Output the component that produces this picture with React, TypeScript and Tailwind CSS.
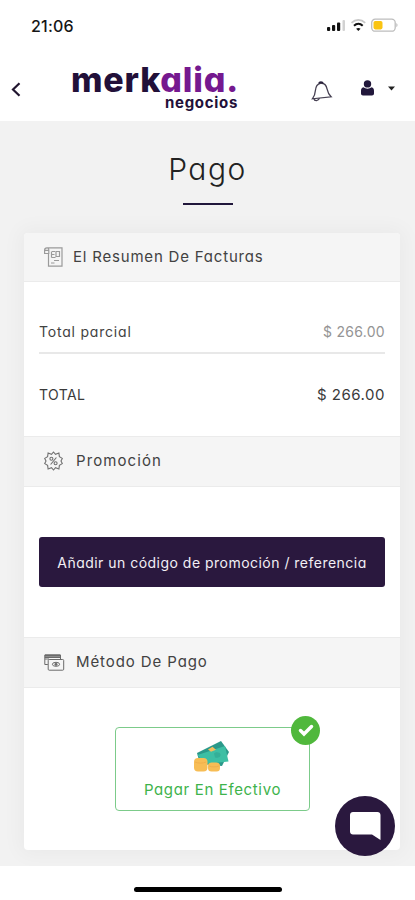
import React from 'react';

interface SectionHeaderProps {
  icon: React.ReactNode;
  title: string;
  className: string;
}

const SectionHeader: React.FC<SectionHeaderProps> = ({ icon, title, className }) => (
  <div className="h-[51px] shrink-0 bg-[#f5f5f5] border-y border-[#ebebeb] flex items-center pl-5 pb-px text-[#424242] first:h-[49px] first:border-t-0">
    {icon}
    <h2 className={`text-[15px] leading-5 whitespace-nowrap ${className}`}>{title}</h2>
  </div>
);

const InvoiceIcon = () => (
  <svg width="19" height="20" viewBox="0 0 19 20" fill="none" stroke="#9a9a9a" strokeWidth="1.200">
    <path d="M3 .8h15v18.400H4.500V6.500M3 .8C1.200.8.6 1.800.6 3.200v3.300h4.200V3.200C4.800 1.600 4.300.8 3 .8zM.6 3.400h4" />
    <path d="M8 4.500h3M8 7.500h2.500M12 4.500h3.500v5H12zM7.500 10.500h4M10 13.500h5M7 16h3.500M7.500 4.500v6" />
  </svg>
);

const PromoIcon = () => (
  <svg width="19" height="20" viewBox="0 0 19 20" fill="none" stroke="#707070" strokeWidth="1.100">
    <path d="M9.500 1l2 2.300 3.400-1.200.5 3.500 2.900 1.800L17 10l1.300 2.600-2.900 1.800-.5 3.500-3.400-1.200-2 2.300-2-2.300-3.400 1.200-.5-3.500-2.900-1.800L2 10 .7 7.400l2.900-1.800.5-3.500 3.400 1.200z" />
    <circle cx="7.400" cy="7.800" r="1.500" />
    <circle cx="11.600" cy="12.200" r="1.500" />
    <path d="M12.400 6.500l-5.800 7" />
  </svg>
);

const PaymentIcon = () => (
  <svg width="21" height="17" viewBox="0 0 21 17" fill="none" stroke="#6a6a6a" strokeWidth="1">
    <path d="M.8 1.200h15.700M.8 3.200h15.700" strokeWidth="1.700" />
    <path d="M.8 1v9.500h3M16.500 1v4M1 5h4" />
    <rect x="4.200" y="5.500" width="15.500" height="10.700" rx="1" fill="#f5f5f5" />
    <ellipse cx="12" cy="10.300" rx="3.600" ry="2" />
    <circle cx="12" cy="10.300" r="1.100" fill="#6a6a6a" />
  </svg>
);

const CashIcon = () => (
  <svg className="absolute left-[78px] top-[12px]" width="38" height="33" viewBox="0 0 38 33">
    <path d="M3 13L27 1l8 11-7 14-22-2z" fill="#2b998a" />
    <path d="M3.500 15L31 6l3.500 15.500L11 24z" fill="#3dbfa4" />
    <path d="M14 9.500l4.500-2.800 3.500 3-5 2z" fill="#f2bd5c" />
    <path d="M20 13.500c2-2 6-1.500 6.500 1s-3 4-5.500 3z" fill="#35af98" />
    <rect x="0" y="18" width="13.500" height="13.500" rx="4" fill="#f7bd55" />
    <rect x="14" y="22.500" width="12" height="9" rx="3.500" fill="#f7bd55" />
    <path d="M1 22c3 1.500 8 1.500 11 0M15 26c3 1.200 7 1.200 10 0" stroke="#f0af4c" strokeWidth="1" fill="none" />
  </svg>
);

const StatusBar = () => (
  <div className="h-[52px] flex items-center justify-between pl-[31px] pr-[17px] pb-px">
    <span className="text-[16px] font-medium tracking-[0.2px] text-[#161616]">21:06</span>
    <svg width="72" height="15" viewBox="0 0 72 15">
      <rect x="1" y="9" width="3.200" height="4" rx="1" fill="#111" />
      <rect x="6" y="7" width="3.200" height="6" rx="1" fill="#111" />
      <rect x="11" y="4.500" width="3.200" height="8.500" rx="1" fill="#111" />
      <rect x="16.500" y="2" width="2.500" height="11" rx="1" fill="#d2d2d2" />
      <path d="M25.500 4.800c4-4 9.700-4 13.700 0" stroke="#c8c8c8" strokeWidth="1.700" fill="none" />
      <path d="M28 7.700c2.600-2.500 6.100-2.500 8.700 0" stroke="#111" strokeWidth="2" fill="none" />
      <path d="M32.350 13l-2.200-2.300c1.300-1.100 3.100-1.100 4.400 0z" fill="#111" />
      <rect x="45.700" y="1.200" width="23.500" height="12" rx="3.500" fill="none" stroke="#bdbdbd" strokeWidth="1.300" />
      <rect x="47.500" y="3" width="9" height="8.400" rx="1.800" fill="#fac412" />
      <path d="M70.300 5c1.700.8 1.700 3.400 0 4.200z" fill="#bdbdbd" />
    </svg>
  </div>
);

const Header = () => (
  <header className="h-[69px] flex items-start">
    <svg className="ml-[11px] mt-[30px]" width="10" height="15" viewBox="0 0 10 15" fill="none" stroke="#21152f" strokeWidth="2.200">
      <path d="M8.500 1.200L2 7.500l6.500 6.300" />
    </svg>
    <div className="ml-[50px] w-[168px] shrink-0">
      <div className="text-[34px] leading-[34px] mt-[11px] font-extrabold tracking-[0.8px] whitespace-nowrap text-[#221039]">
        merk<span className="text-[#75198f]">alia.</span>
      </div>
      <div className="-mt-[3px] pr-px text-right text-[15px] leading-[18px] font-bold tracking-[0.7px] whitespace-nowrap text-[#221039]">negocios</div>
    </div>
    <svg className="ml-[72px] mt-[29px]" width="22" height="22" viewBox="0 0 22 22" fill="none" stroke="#464052" strokeWidth="1.300">
      <path d="M9.500 2.300C6 2.800 4.700 6 4.400 9.500c-.2 3.500-.7 5.200-3 8.300l18.700-2c-3-2.800-3.400-4.800-4-7.700C15.200 4 13 1.800 9.500 2.300z" />
      <path d="M8 2.500c.4-1.900 3.400-2 4 0" stroke="#28213c" strokeWidth="1.800" />
      <path d="M3 17.800c.3 2.400 4.700 2.400 5.400-.6" />
    </svg>
    <svg className="ml-[28px] mt-[28px]" width="13" height="16" viewBox="0 0 13 16" fill="#21173b">
      <circle cx="6.500" cy="3.900" r="3.700" />
      <path d="M2.300 7.300c2.500 1.800 5.900 1.800 8.400 0 1.500.5 2.300 1.800 2.300 3.500v2.700c0 1.200-.8 2-2 2H2c-1.200 0-2-.8-2-2v-2.700c0-1.700.8-3 2.300-3.500z" />
    </svg>
    <svg className="ml-[14px] mt-[34px]" width="7" height="5" viewBox="0 0 7 5" fill="#222">
      <path d="M0 .5h7L3.500 4.500z" />
    </svg>
  </header>
);

const App: React.FC = () => {
  return (
    <div className="relative w-[415px] h-[900px] overflow-hidden bg-white flex flex-col font-[Inter,sans-serif] [font-feature-settings:'cv11']">
      <StatusBar />
      <Header />

      <main className="h-[745px] shrink-0 overflow-hidden bg-[#f2f2f2] flex flex-col items-center">
        <h1 className="mt-[29px] text-[30px] leading-[38px] font-light tracking-[1.5px] text-[#222]">Pago</h1>
        <div className="mt-[15px] w-[50px] h-[2px] bg-[#21173b]" />

        <section className="mt-[28px] ml-[9px] w-[376px] h-[617px] shrink-0 rounded-[4px] overflow-hidden bg-white flex flex-col shadow-[0_0_20px_5px_rgba(0,0,0,0.035)]">
          <SectionHeader icon={<InvoiceIcon />} title="El Resumen De Facturas" className="ml-[10px] tracking-[0.8px]" />
          <div className="h-[154px] shrink-0 px-[15px] text-[14px] leading-5">
            <div className="h-[72px] pt-[40px] border-b-2 border-[#e8e8e8] flex justify-between text-[#424242]">
              <span className="tracking-[0.8px]">Total parcial</span>
              <span className="tracking-[0.3px] text-[#949494]">$ 266.00</span>
            </div>
            <div className="pt-[31px] flex justify-between text-[#3a3a3a]">
              <span className="tracking-[0.4px]">TOTAL</span>
              <span className="text-[15px] tracking-[0.5px]">$ 266.00</span>
            </div>
          </div>

          <SectionHeader icon={<PromoIcon />} title="Promoción" className="ml-[13px] tracking-[1.1px]" />
          <div className="h-[150px] shrink-0 px-[15px] pt-[50px]">
            <button className="w-full h-[50px] rounded-[3px] bg-[#2a183e] text-[14px] tracking-[0.48px] text-[#f2eff5] whitespace-nowrap">
              Añadir un código de promoción / referencia
            </button>
          </div>

          <SectionHeader icon={<PaymentIcon />} title="Método De Pago" className="ml-[11px] tracking-[0.9px]" />
          <div className="pt-[39px] pl-[91px]">
            <div className="relative w-[195px] h-[84px] rounded-[4px] border border-[#7ccb8a] flex items-end justify-center pb-[10px]">
              <CashIcon />
              <span className="text-[15px] leading-5 tracking-[0.65px] whitespace-nowrap text-[#3eb34b]">Pagar En Efectivo</span>
              <span className="absolute -right-[11px] -top-[12px] size-[29px] rounded-full bg-[#50b83c] flex items-center justify-center">
                <svg width="16" height="13" viewBox="0 0 16 13" fill="none" stroke="#fff" strokeWidth="3.500" strokeLinecap="round">
                  <path d="M2.500 6.500l3.500 3.500L13.500 2.500" />
                </svg>
              </span>
            </div>
          </div>
        </section>
      </main>

      {/* Home indicator */}
      <div className="h-[34px] flex justify-center pt-[21px]">
        <div className="w-[148px] h-[5px] rounded-full bg-black" />
      </div>

      {/* Chat launcher */}
      <button className="absolute left-[335px] top-[796px] size-[60px] rounded-full bg-[#2a183e]">
        <svg width="60" height="60" viewBox="0 0 60 60" fill="#fff">
          <path d="M18 16h24.500c1.700 0 3 1.300 3 3v25l-8.500-5.500H18c-1.700 0-3-1.300-3-3V19c0-1.700 1.300-3 3-3z" />
        </svg>
      </button>
    </div>
  );
};

export default App;
